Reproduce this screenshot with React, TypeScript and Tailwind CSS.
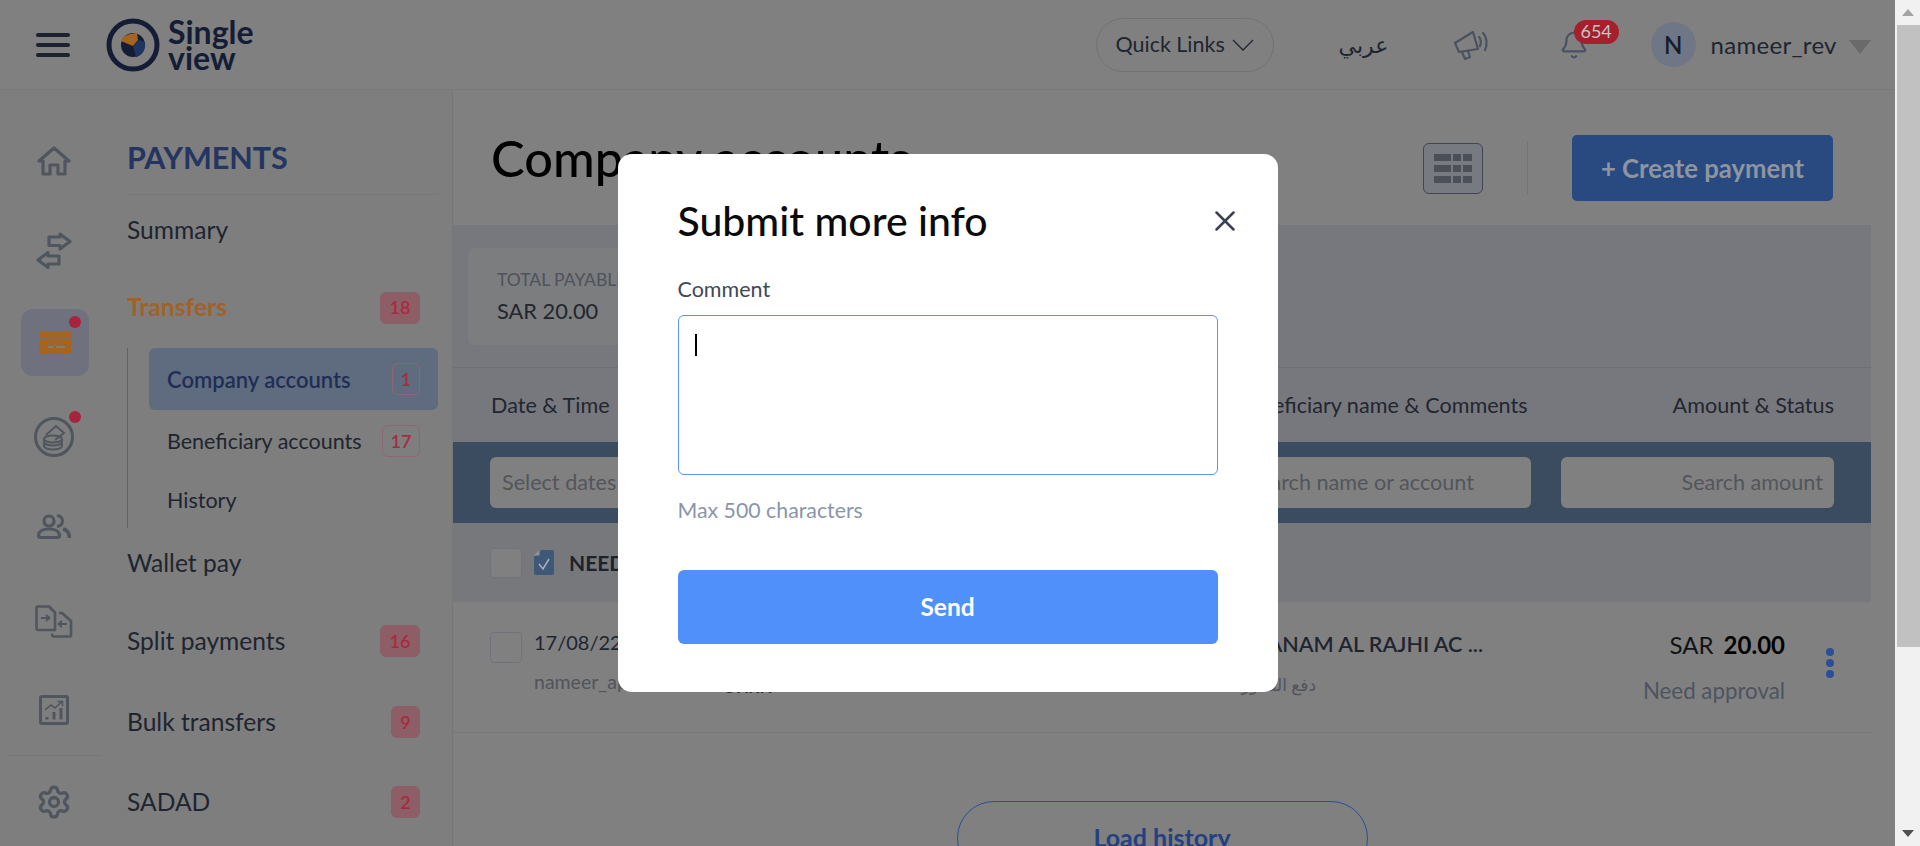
import { Bell, Settings, X } from 'lucide-react';

const railIconColor = '#50565f';

function HomeIcon() {
  return (
    <svg width="34" height="30" viewBox="0 0 34 30" fill="none" stroke={railIconColor} strokeWidth="3.200" strokeLinejoin="round">
      <path d="M2 15 17 2l15 13h-4v13h-7v-9h-8v9H6V15z" />
    </svg>
  );
}

function TransferIcon() {
  return (
    <svg width="36" height="37" viewBox="0 0 36 37" fill="none" stroke={railIconColor} strokeWidth="3.200" strokeLinejoin="round">
      <path d="M13 5h11V2l10 7.500L24 17v-3.500H13z" />
      <path d="M23 24H12v-3.500L2 28l10 7.500V32h11z" />
    </svg>
  );
}

function CardIcon() {
  return (
    <svg width="32" height="23" viewBox="0 0 32 23" fill="#a5641f">
      <path d="M3 0h26a3 3 0 0 1 3 3v3H0V3a3 3 0 0 1 3-3z" />
      <path d="M0 7.500h32V20a3 3 0 0 1-3 3H3a3 3 0 0 1-3-3z" />
      <rect x="9" y="15" width="5" height="2" fill="#7b7f80" />
      <rect x="17" y="15" width="9" height="2" fill="#7b7f80" />
    </svg>
  );
}

function CoinIcon() {
  return (
    <svg width="40" height="40" viewBox="0 0 40 40" fill="none" stroke={railIconColor} strokeWidth="2">
      <circle cx="20" cy="20" r="18.500" strokeWidth="3" />
      <path d="M12 18 22 9l8 7-9 7" />
      <ellipse cx="19" cy="22" rx="9" ry="3.500" />
      <path d="M10 22v3c0 2 4 3.500 9 3.500s9-1.500 9-3.500v-3M10 26v3c0 2 4 3.500 9 3.500s9-1.500 9-3.500v-3" />
    </svg>
  );
}

function UsersIcon() {
  return (
    <svg width="34" height="25" viewBox="0 0 34 25" fill="none" stroke={railIconColor} strokeWidth="3.200">
      <circle cx="12" cy="7" r="5" />
      <path d="M4 23.500c-2 0-2.500-1-2.500-2 0-4 4-6.500 10.500-6.500s10.500 2.500 10.500 6.500c0 1-.5 2-2.500 2z" strokeLinejoin="round" />
      <path d="M20 1.500c4 .5 5.500 3 5.500 5.500s-1.500 5-5.500 5.500" strokeWidth="3" />
      <path d="M26 15c4 1 6.500 4 6.500 9" strokeWidth="3.500" />
    </svg>
  );
}

function DocsIcon() {
  return (
    <svg width="38" height="33" viewBox="0 0 38 33" fill="none" stroke={railIconColor} strokeWidth="2.600" strokeLinejoin="round">
      <path d="M3 1.500h11l6 6V25H3a1.500 1.500 0 0 1-1.500-1.500v-20A1.500 1.500 0 0 1 3 1.500z" />
      <path d="M24 8h3l9 8v14.500a1 1 0 0 1-1 1H19c-1 0-2-1-2-3" />
      <path d="M6 13h8M11 10l3.500 3-3.500 3M32 19h-8M27 16l-3.500 3 3.500 3" strokeWidth="2" />
    </svg>
  );
}

function ChartIcon() {
  return (
    <svg width="30" height="30" viewBox="0 0 30 30" fill="none" stroke={railIconColor} strokeWidth="2.500">
      <rect x="1.500" y="1.500" width="27" height="27" rx="1.500" strokeWidth="3" />
      <path d="M6 15 12 10l4 3 7-6.500M18.500 6.500H23.500V11" strokeWidth="1.600" />
      <path d="M8 22v2.500M15 17v7.500M22 13v11.500" strokeWidth="3" />
    </svg>
  );
}

function GridIcon() {
  return (
    <svg width="38" height="29" viewBox="0 0 38 29" fill="#4b5058">
      <rect x="0" y="0" width="17" height="7" />
      <rect x="19" y="0" width="8" height="7" />
      <rect x="29" y="0" width="9" height="7" />
      <rect x="0" y="11" width="17" height="7" />
      <rect x="19" y="11" width="8" height="7" />
      <rect x="29" y="11" width="9" height="7" />
      <rect x="0" y="22" width="17" height="7" />
      <rect x="19" y="22" width="8" height="7" />
      <rect x="29" y="22" width="9" height="7" />
    </svg>
  );
}

function MegaphoneIcon() {
  return (
    <svg width="38" height="30" viewBox="0 0 38 30" fill="none" stroke="#4a5260" strokeWidth="2.200" strokeLinejoin="round" strokeLinecap="round">
      <path d="M2 13 20 2l5 17-19 3z" />
      <path d="M9 22l3 7 5-2-2-6" />
      <path d="M26 7c2 2 2.500 6 1 9" />
      <path d="M30 3c4 4 4.500 12 2 17" />
    </svg>
  );
}

function Logo() {
  return (
    <svg width="54" height="54" viewBox="0 0 54 54" fill="none">
      <circle cx="27" cy="27" r="24" stroke="#151d36" strokeWidth="5" />
      <circle cx="27" cy="27" r="12" fill="#151d36" />
      <path d="M15 23c1-4 5-7 16-8l1 7-5 6z" fill="#a5641f" />
      <path d="M33 22l6 2c1 7-3 14-9 15l-3-11z" fill="#1f3560" />
    </svg>
  );
}

function Badge({ value, filled, width }: { value: string; filled?: boolean; width: string }) {
  return (
    <span
      className={`flex h-[32px] items-center justify-center rounded-[6px] text-[18px] font-semibold text-[#a52c40] ${width} ${
        filled ? 'bg-[#8e5e67]' : 'border border-[#8a6a72]'
      }`}
    >
      {value}
    </span>
  );
}

function NavItem({ label, height, badge, badgeWidth, className }: { label: string; height: string; badge?: string; badgeWidth?: string; className?: string }) {
  return (
    <div className={`flex items-center justify-between pr-[18px] ${height} ${className ?? 'text-[24.600px] text-[#1f2530]'}`}>
      <span>{label}</span>
      {badge && <Badge value={badge} filled width={badgeWidth ?? 'w-[40px]'} />}
    </div>
  );
}

function Sidebar() {
  return (
    <aside className="flex w-[113px] shrink-0 flex-col items-center bg-[#7d7e7d] pr-[5px] pt-[53px]">
      <div className="flex h-[36px] items-center">
        <HomeIcon />
      </div>
      <div className="mt-[43px] flex h-[56px] items-center">
        <TransferIcon />
      </div>
      <div className="relative ml-[2px] mt-[31px] flex h-[67px] w-[68px] items-center justify-center rounded-[12px] bg-[#6f717f]">
        <CardIcon />
        <span className="absolute right-[8px] top-[7px] h-[12px] w-[12px] rounded-full bg-[#a8243d]" />
      </div>
      <div className="relative mt-[41px] flex h-[40px] items-center">
        <CoinIcon />
        <span className="absolute right-[-7px] top-[-6px] h-[12px] w-[12px] rounded-full bg-[#a8243d]" />
      </div>
      <div className="mt-[55px] flex h-[28px] items-center">
        <UsersIcon />
      </div>
      <div className="mt-[64px] flex h-[34px] items-center">
        <DocsIcon />
      </div>
      <div className="mt-[56px] flex h-[32px] items-center">
        <ChartIcon />
      </div>
      <div className="mt-[29px] h-px w-[94px] bg-[#767876]" />
      <div className="mt-[29px] flex h-[34px] items-center">
        <Settings size={36} color={railIconColor} strokeWidth={2.200} />
      </div>
    </aside>
  );
}

function SubNav() {
  return (
    <nav className="w-[340px] shrink-0 border-r border-[#767876] bg-[#7d7e7d] pl-[14px] pr-[14px]">
      <div className="flex h-[105px] items-end border-b border-[#767876] pb-[19px] text-[30.500px] font-bold leading-[36px] text-[#233560]">
        PAYMENTS
      </div>
      <NavItem label="Summary" height="h-[70px]" />
      <NavItem label="Transfers" height="h-[83px]" badge="18" className="pt-[2px] text-[24.600px] font-bold text-[#a0622a]" />
      <div className="border-l border-[#5e6468] pl-[21px]">
        <div className="flex h-[62px] items-center justify-between rounded-[6px] bg-[#5f6b7e] pl-[18px] pr-[18px] text-[22px] font-semibold text-[#1f2e55]">
          <span>Company accounts</span>
          <Badge value="1" width="w-[28px]" />
        </div>
        <div className="flex h-[62px] items-center justify-between pl-[18px] pr-[18px] text-[21.500px] text-[#1f2530]">
          <span>Beneficiary accounts</span>
          <Badge value="17" width="w-[38px]" />
        </div>
        <div className="flex h-[56px] items-center pl-[18px] text-[21.500px] text-[#1f2530]">History</div>
      </div>
      <NavItem label="Wallet pay" height="h-[70px]" />
      <NavItem label="Split payments" height="h-[86px]" badge="16" />
      <NavItem label="Bulk transfers" height="h-[76px]" badge="9" badgeWidth="w-[29px]" />
      <NavItem label="SADAD" height="h-[84px]" badge="2" badgeWidth="w-[29px]" />
    </nav>
  );
}

function Header() {
  return (
    <header className="flex h-[90px] shrink-0 items-center border-b border-[#7a7a7a] bg-[#808080] pl-[36px]">
      <div className="flex w-[34px] flex-col gap-[6px]">
        <span className="h-[4px] rounded-full bg-[#1c2230]" />
        <span className="h-[4px] rounded-full bg-[#1c2230]" />
        <span className="h-[4px] rounded-full bg-[#1c2230]" />
      </div>
      <div className="ml-[36px]">
        <Logo />
      </div>
      <div className="ml-[8px] text-[32px] font-bold leading-[26px] text-[#151d36]">
        <div>Single</div>
        <div>view</div>
      </div>
      <div className="ml-[842px] flex h-[54px] w-[178px] items-center justify-center gap-[7px] rounded-full border border-[#727272] text-[21.500px] text-[#1f2530]">
        Quick Links
        <svg width="22" height="12" viewBox="0 0 22 12" fill="none" stroke="#1f2530" strokeWidth="1.300">
          <path d="M1 1l10 10L21 1" />
        </svg>
      </div>
      <span className="ml-[65px] w-[44px] text-center text-[22px] text-[#1f2530]">عربي</span>
      <span className="ml-[70px]">
        <MegaphoneIcon />
      </span>
      <div className="relative ml-[68px]">
        <Bell size={30} color="#4a5260" strokeWidth={1.800} />
        <span className="absolute left-[15px] top-[-10px] flex h-[24px] w-[45px] items-center justify-center rounded-full bg-[#a51f2c] text-[18px] text-[#c4c4c4]">
          654
        </span>
      </div>
      <div className="ml-[62px] flex h-[45px] w-[45px] items-center justify-center rounded-full bg-[#6f7686] text-[24px] font-semibold text-[#171c28]">
        N
      </div>
      <span className="ml-[15px] text-[24px] tracking-[0.3px] text-[#1f2530]">nameer_rev</span>
      <span className="ml-[12px] mt-[4px] h-0 w-0 border-x-[11px] border-t-[14px] border-x-transparent border-t-[#6a6a6a]" />
    </header>
  );
}

function Checkbox({ height }: { height: string }) {
  return <span className={`w-[32px] shrink-0 rounded-[4px] border border-[#6f747c] bg-[#808080] ${height}`} />;
}

function Main() {
  return (
    <main className="min-w-0 flex-1 overflow-hidden">
      <div className="mr-[24px]">
        <div className="flex h-[135px] items-center pl-[38px] pr-[38px] pt-[21px]">
          <h1 className="-mt-[21px] flex-1 text-[50.500px] font-medium text-black">Company accounts</h1>
          <div className="flex h-[51px] w-[60px] items-center justify-center rounded-[6px] border border-[#3f4652] bg-[#777a80]">
            <GridIcon />
          </div>
          <span className="mx-[44px] h-[52px] w-px bg-[#747474]" />
          <button className="flex h-[66px] w-[261px] items-center justify-center rounded-[5px] bg-[#284a80] text-[25.700px] font-bold text-[#8f95a0]">
            + Create payment
          </button>
        </div>

        <div className="h-[143px] border-b border-[#6c6f76] bg-[#76787e] pl-[15px] pt-[23px]">
          <div className="h-[97px] w-[500px] rounded-[6px] bg-[#7c7d7e] pl-[29px] pt-[20px]">
            <div className="text-[17.500px] leading-[24px] text-[#4e525c]">TOTAL PAYABLE</div>
            <div className="mt-[5px] text-[21.800px] leading-[28px] text-[#23262e]">SAR 20.00</div>
          </div>
        </div>

        <div className="flex h-[74px] items-center justify-between bg-[#76787e] pl-[38px] pr-[37px] text-[21.600px] text-[#23262e]">
          <span>Date &amp; Time</span>
          <span className="ml-auto mr-[145px]">Beneficiary name &amp; Comments</span>
          <span>Amount &amp; Status</span>
        </div>

        <div className="flex h-[81px] items-center bg-[#3c4c60] pl-[37px] pr-[37px] text-[21.600px] text-[#52565c]">
          <div className="flex h-[51px] flex-1 items-center rounded-[6px] bg-[#808080] pl-[12px]">Select dates</div>
          <div className="flex h-[51px] w-[400px] items-center justify-end rounded-[6px] bg-[#808080] pr-[57px]">Search name or account</div>
          <div className="ml-[30px] flex h-[51px] w-[273px] items-center justify-end rounded-[6px] bg-[#808080] pr-[11px]">Search amount</div>
        </div>

        <div className="flex h-[79px] items-center bg-[#76787c] pl-[37px]">
          <Checkbox height="h-[30px]" />
          <svg width="20" height="25" viewBox="0 0 20 25" className="ml-[12px]">
            <path d="M7 0h11a2 2 0 0 1 2 2v21a2 2 0 0 1-2 2H2a2 2 0 0 1-2-2V7z" fill="#3f5878" />
            <path d="M5.500 0 0 5.500h5.500z" fill="#8a93a0" />
            <path d="m5 14 4 5 6-10" fill="none" stroke="#a8b0bc" strokeWidth="1.500" />
          </svg>
          <span className="ml-[15px] text-[21px] font-bold text-[#1f222a]">NEED APPROVAL</span>
        </div>

        <div className="relative flex h-[131px] border-b border-[#787878] pl-[37px] pr-[37px]">
          <Checkbox height="h-[31px] mt-[30px]" />
          <div className="ml-[12px] pt-[26px]">
            <div className="text-[20px] leading-[28px] text-[#1f2530]">17/08/22</div>
            <div className="mt-[14px] text-[19.500px] leading-[24px] text-[#50545c]">nameer_app</div>
          </div>
          <div className="ml-[84px] pt-[72px] text-[18px] font-medium leading-[24px] text-[#1f2530]">UKRK</div>
          <div className="ml-auto mr-[112px] w-[400px] pt-[28px] text-right">
            <div className="text-[21.500px] font-semibold leading-[28px] text-[#1f2530]">HANAM AL RAJHI AC ...</div>
            <div className="mr-[167px] mt-[15px] text-[17px] leading-[24px] text-[#50545c]">دفع الفاتورة</div>
          </div>
          <div className="mr-[41px] w-[190px] pt-[28px] text-right">
            <div className="text-[24px] leading-[30px] text-[#111318]">
              SAR <span className="ml-[4px] font-bold text-black">20.00</span>
            </div>
            <div className="mt-[18px] text-[22.300px] leading-[26px] text-[#4d5460]">Need approval</div>
          </div>
          <div className="flex flex-col gap-[3px] pt-[46px]">
            <span className="h-[8px] w-[8px] rounded-full bg-[#2a4f96]" />
            <span className="h-[8px] w-[8px] rounded-full bg-[#2a4f96]" />
            <span className="h-[8px] w-[8px] rounded-full bg-[#2a4f96]" />
          </div>
        </div>

        <div className="flex justify-center pt-[68px]">
          <button className="flex h-[74px] w-[411px] items-start justify-center rounded-full border border-[#2a4f96] pt-[20px] text-[25px] font-bold leading-[30px] text-[#234080]">
            Load history
          </button>
        </div>
      </div>
    </main>
  );
}

function Modal() {
  return (
    <div className="absolute inset-0 flex justify-center pt-[154px]">
      <div className="h-[538px] w-[660px] rounded-[14px] bg-white px-[60px] pt-[42px]">
        <div className="flex items-center justify-between">
          <h2 className="text-[41px] font-medium leading-[50px] text-[#0a0a0a]">Submit more info</h2>
          <X size={34} color="#3a4252" strokeWidth={1.800} className="mr-[-24px]" />
        </div>
        <label className="mt-[30px] block text-[21.500px] leading-[26px] text-[#414856]">Comment</label>
        <div className="mt-[13px] h-[160px] rounded-[6px] border border-[#5a93f5] pl-[16px] pt-[18px]">
          <span className="block h-[22px] w-[2px] bg-black" />
        </div>
        <p className="mt-[22px] text-[21.300px] leading-[26px] text-[#8a96a8]">Max 500 characters</p>
        <button className="mt-[47px] h-[74px] w-full rounded-[6px] bg-[#5090fa] text-[24.500px] font-bold text-white">Send</button>
      </div>
    </div>
  );
}

function Scrollbar() {
  return (
    <div className="flex w-[25px] shrink-0 flex-col items-center bg-[#f1f1f1]">
      <div className="flex h-[25px] items-center">
        <span className="h-0 w-0 border-x-[6px] border-b-[7px] border-x-transparent border-b-[#a3a3a3]" />
      </div>
      <div className="ml-[2px] h-[622px] w-[23px] bg-[#c1c1c1]" />
      <div className="mt-auto flex h-[25px] items-center">
        <span className="h-0 w-0 border-x-[6px] border-t-[7px] border-x-transparent border-t-[#505050]" />
      </div>
    </div>
  );
}

export default function App() {
  return (
    <div className="flex h-[846px] overflow-hidden bg-[#808080] font-['Lato','DejaVu_Sans',sans-serif]">
      <div className="relative flex min-w-0 flex-1 flex-col overflow-hidden">
        <Header />
        <div className="flex min-h-0 flex-1">
          <Sidebar />
          <SubNav />
          <Main />
        </div>
        <Modal />
      </div>
      <Scrollbar />
    </div>
  );
}
